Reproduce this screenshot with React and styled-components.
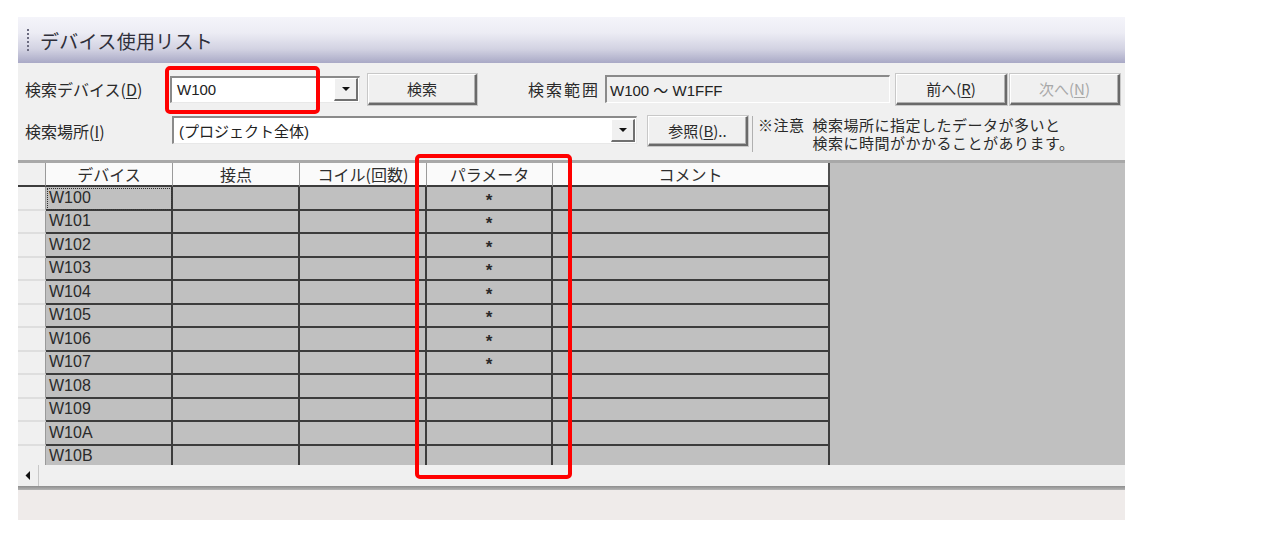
import React from "react";
import styled, { createGlobalStyle } from "styled-components";

const GlobalStyle = createGlobalStyle`
  body {
    margin: 0;
    background: #ffffff;
    font-family: "Noto Sans CJK JP", "Noto Sans", sans-serif;
    color: #2a2a2a;
  }
`;

const devices = [
  "W100", "W101", "W102", "W103", "W104", "W105",
  "W106", "W107", "W108", "W109", "W10A", "W10B",
];

function App() {
  return (
    <>
      <GlobalStyle />
      <Page>
        <Window>
          <TitleBar>
            <Grip />
            <Title>デバイス使用リスト</Title>
          </TitleBar>

          <Form>
            <FormRow>
              <Label>
                検索デバイス(<u>D</u>)
              </Label>
              <Combo width={190}>
                <ComboText>W100</ComboText>
                <DropButton>
                  <DownArrow />
                </DropButton>
              </Combo>
              <Button width={109}>検索</Button>
              <RangeLabel>検索範囲</RangeLabel>
              <ReadOnly>W100 〜 W1FFF</ReadOnly>
              <Button width={111} style={{ marginLeft: 6 }}>
                前へ(<u>R</u>)
              </Button>
              <Button width={110} disabled style={{ marginLeft: 3 }}>
                次へ(<u>N</u>)
              </Button>
            </FormRow>

            <FormRow second>
              <Label>
                検索場所(<u>I</u>)
              </Label>
              <Combo width={465} second>
                <ComboText>(プロジェクト全体)</ComboText>
                <DropButton>
                  <DownArrow />
                </DropButton>
              </Combo>
              <Button width={100} tall style={{ marginLeft: 11 }}>
                参照(<u>B</u>)..
              </Button>
              <Note>
                <span>※注意</span>
                <NoteLines>
                  <NoteLine>検索場所に指定したデータが多いと</NoteLine>
                  <NoteLine>検索に時間がかかることがあります。</NoteLine>
                </NoteLines>
              </Note>
            </FormRow>
          </Form>

          <GridArea>
            <GridRow header>
              <HeadCell corner />
              <HeadCell>デバイス</HeadCell>
              <HeadCell>接点</HeadCell>
              <HeadCell>コイル(回数)</HeadCell>
              <HeadCell>パラメータ</HeadCell>
              <HeadCell last>コメント</HeadCell>
            </GridRow>
            <GridBody>
              {devices.map((d, i) => (
                <GridRow key={d}>
                  <RowHead />
                  <Cell focused={i === 0}>{d}</Cell>
                  <Cell />
                  <Cell />
                  <Cell center>{i < 8 ? "*" : ""}</Cell>
                  <Cell last />
                </GridRow>
              ))}
            </GridBody>
          </GridArea>

          <HScroll>
            <ScrollArrow>
              <svg width="6" height="9" viewBox="0 0 6 9">
                <path d="M5 0 L5 9 L0.5 4.5 Z" fill="#111" />
              </svg>
            </ScrollArrow>
          </HScroll>
          <Divider />
          <StatusBar />

          <Highlight left={147} top={49} width={155} height={48} />
          <Highlight left={397} top={137} width={157} height={325} />
        </Window>
      </Page>
    </>
  );
}

const Page = styled.div`
  padding: 17px 0 0 18px;
`;

const Window = styled.div`
  position: relative;
  width: 1107px;
  background: #f0f0f0;
`;

const TitleBar = styled.div`
  height: 46px;
  display: flex;
  align-items: center;
  background: linear-gradient(
    #f4f4fa 0%,
    #ececf4 35%,
    #d2d2e2 70%,
    #a9a9c6 100%
  );
`;

const Grip = styled.div`
  width: 2px;
  height: 24px;
  margin-left: 9px;
  margin-top: 2px;
  background: repeating-linear-gradient(
    #6c6c80 0px,
    #6c6c80 2px,
    transparent 2px,
    transparent 4px
  );
`;

const Title = styled.div`
  margin-left: 11px;
  font-size: 19px;
  color: #2f2f3a;
  letter-spacing: 0.3px;
`;

const Form = styled.div`
  padding: 10px 0 14px 7px;
  display: flex;
  flex-direction: column;
  gap: 11px;
`;

const FormRow = styled.div`
  display: flex;
  align-items: ${(p) => (p.second ? "flex-start" : "center")};
  height: ${(p) => (p.second ? "30px" : "32px")};
`;

const Label = styled.div`
  width: 145px;
  font-size: 16px;
  color: #2a2a2a;
  align-self: center;
  u {
    text-underline-offset: 2px;
  }
`;

const Combo = styled.div`
  width: ${(p) => p.width}px;
  height: ${(p) => (p.second ? 28 : 27)}px;
  margin-left: ${(p) => (p.second ? 2 : 0)}px;
  box-sizing: border-box;
  display: flex;
  align-items: center;
  background: #ffffff;
  border-top: 2px solid #8a8a8a;
  border-left: 2px solid #8a8a8a;
  border-right: 1px solid #e8e8e8;
  border-bottom: 1px solid #e8e8e8;
`;

const ComboText = styled.div`
  flex: 1;
  padding-left: 5px;
  font-size: 15px;
  color: #222;
  font-family: "Liberation Sans", "Noto Sans CJK JP", sans-serif;
  white-space: nowrap;
`;

const DropButton = styled.div`
  width: 24px;
  height: 23px;
  box-sizing: border-box;
  margin-right: 1px;
  display: flex;
  align-items: center;
  justify-content: center;
  background: #f0f0f0;
  border-top: 1px solid #ffffff;
  border-left: 1px solid #ffffff;
  border-right: 2px solid #707070;
  border-bottom: 2px solid #707070;
`;

const DownArrow = styled.div`
  width: 0;
  height: 0;
  border-left: 4px solid transparent;
  border-right: 4px solid transparent;
  border-top: 4px solid #111;
`;

const Button = styled.div`
  width: ${(p) => p.width}px;
  height: ${(p) => (p.tall ? 30 : 31)}px;
  margin-left: 8px;
  box-sizing: border-box;
  display: flex;
  align-items: center;
  justify-content: center;
  background: #f0f0f0;
  border-top: 1px solid #ffffff;
  border-left: 1px solid #ffffff;
  border-right: 2px solid #6a6a6a;
  border-bottom: 2px solid #6a6a6a;
  box-shadow: inset -1px -1px 0 #b0b0b0, 0 0 0 1px #c8c8c8;
  font-size: 15px;
  color: ${(p) => (p.disabled ? "#a8a8a8" : "#2a2a2a")};
  u {
    text-underline-offset: 2px;
  }
`;

const RangeLabel = styled.div`
  margin-left: 51px;
  font-size: 16px;
  letter-spacing: 2px;
  color: #2a2a2a;
`;

const ReadOnly = styled.div`
  width: 285px;
  height: 28px;
  margin-left: 5px;
  box-sizing: border-box;
  display: flex;
  align-items: center;
  padding-left: 3px;
  background: #f0f0f0;
  border-top: 2px solid #8a8a8a;
  border-left: 2px solid #8a8a8a;
  border-right: 1px solid #ffffff;
  border-bottom: 1px solid #ffffff;
  font-family: "Liberation Sans", "Noto Sans CJK JP", sans-serif;
  font-size: 15px;
  color: #222;
`;

const Note = styled.div`
  display: flex;
  margin-left: 4px;
  margin-top: 0;
  padding-left: 5px;
  border-left: 1px solid #b0b0b0;
  font-size: 15px;
  line-height: 18px;
  letter-spacing: 0.5px;
  color: #2a2a2a;
  gap: 8px;
`;

const NoteLines = styled.div`
  display: flex;
  flex-direction: column;
`;

const NoteLine = styled.div`
  height: 18px;
  white-space: nowrap;
`;

const GridArea = styled.div`
  border-top: 3px solid #a8a8a8;
  background: #c0c0c0;
  box-sizing: border-box;
`;

const GridBody = styled.div`
  height: 278px;
  overflow: hidden;
`;

const GridRow = styled.div`
  display: grid;
  grid-template-columns: 28px 127px 127px 127px 126px 277px;
  grid-template-rows: 100%;
  height: ${(p) => (p.header ? "24px" : "23.5px")};
  box-sizing: border-box;
`;

const HeadCell = styled.div`
  display: flex;
  align-items: center;
  justify-content: center;
  box-sizing: border-box;
  background: ${(p) => (p.corner ? "#f0f0f0" : "#fafafa")};
  border-right: ${(p) => (p.last ? "2px solid #505050" : "1px solid #9a9a9a")};
  border-bottom: 2px solid #3c3c3c;
  font-size: 16px;
  color: #2e2e2e;
  white-space: nowrap;
  overflow: hidden;
`;

const RowHead = styled.div`
  background: #f0f0f0;
  box-sizing: border-box;
  border-bottom: 2px solid #dedede;
  border-right: 1px solid #9a9a9a;
`;

const Cell = styled.div`
  box-sizing: border-box;
  min-height: 0;
  overflow: hidden;
  background: #c0c0c0;
  border-right: 2px solid #3c3c3c;
  border-bottom: 2px solid #3c3c3c;
  display: flex;
  align-items: center;
  justify-content: ${(p) => (p.center ? "center" : "flex-start")};
  padding-left: ${(p) => (p.center ? 0 : 3)}px;
  padding-top: ${(p) => (p.center ? 5 : 0)}px;
  font-family: "Liberation Sans", sans-serif;
  font-size: ${(p) => (p.center ? 17 : 16)}px;
  line-height: 1;
  font-weight: ${(p) => (p.center ? 700 : 400)};
  color: #2a2a2a;
  outline: ${(p) => (p.focused ? "1px dotted #333" : "none")};
  outline-offset: -2px;
`;

const HScroll = styled.div`
  height: 21px;
  background: #f0f0f0;
  display: flex;
`;

const ScrollArrow = styled.div`
  width: 20px;
  display: flex;
  align-items: center;
  justify-content: center;
  border-right: 1px solid #c8c8c8;
`;

const Divider = styled.div`
  height: 4px;
  background: linear-gradient(#8e8e8e, #b4b4b4);
`;

const StatusBar = styled.div`
  height: 30px;
  background: #efebea;
`;

const Highlight = styled.div`
  position: absolute;
  left: ${(p) => p.left}px;
  top: ${(p) => p.top}px;
  width: ${(p) => p.width}px;
  height: ${(p) => p.height}px;
  box-sizing: border-box;
  border: 4px solid #ff0000;
  border-radius: 5px;
  pointer-events: none;
`;

export default App;
